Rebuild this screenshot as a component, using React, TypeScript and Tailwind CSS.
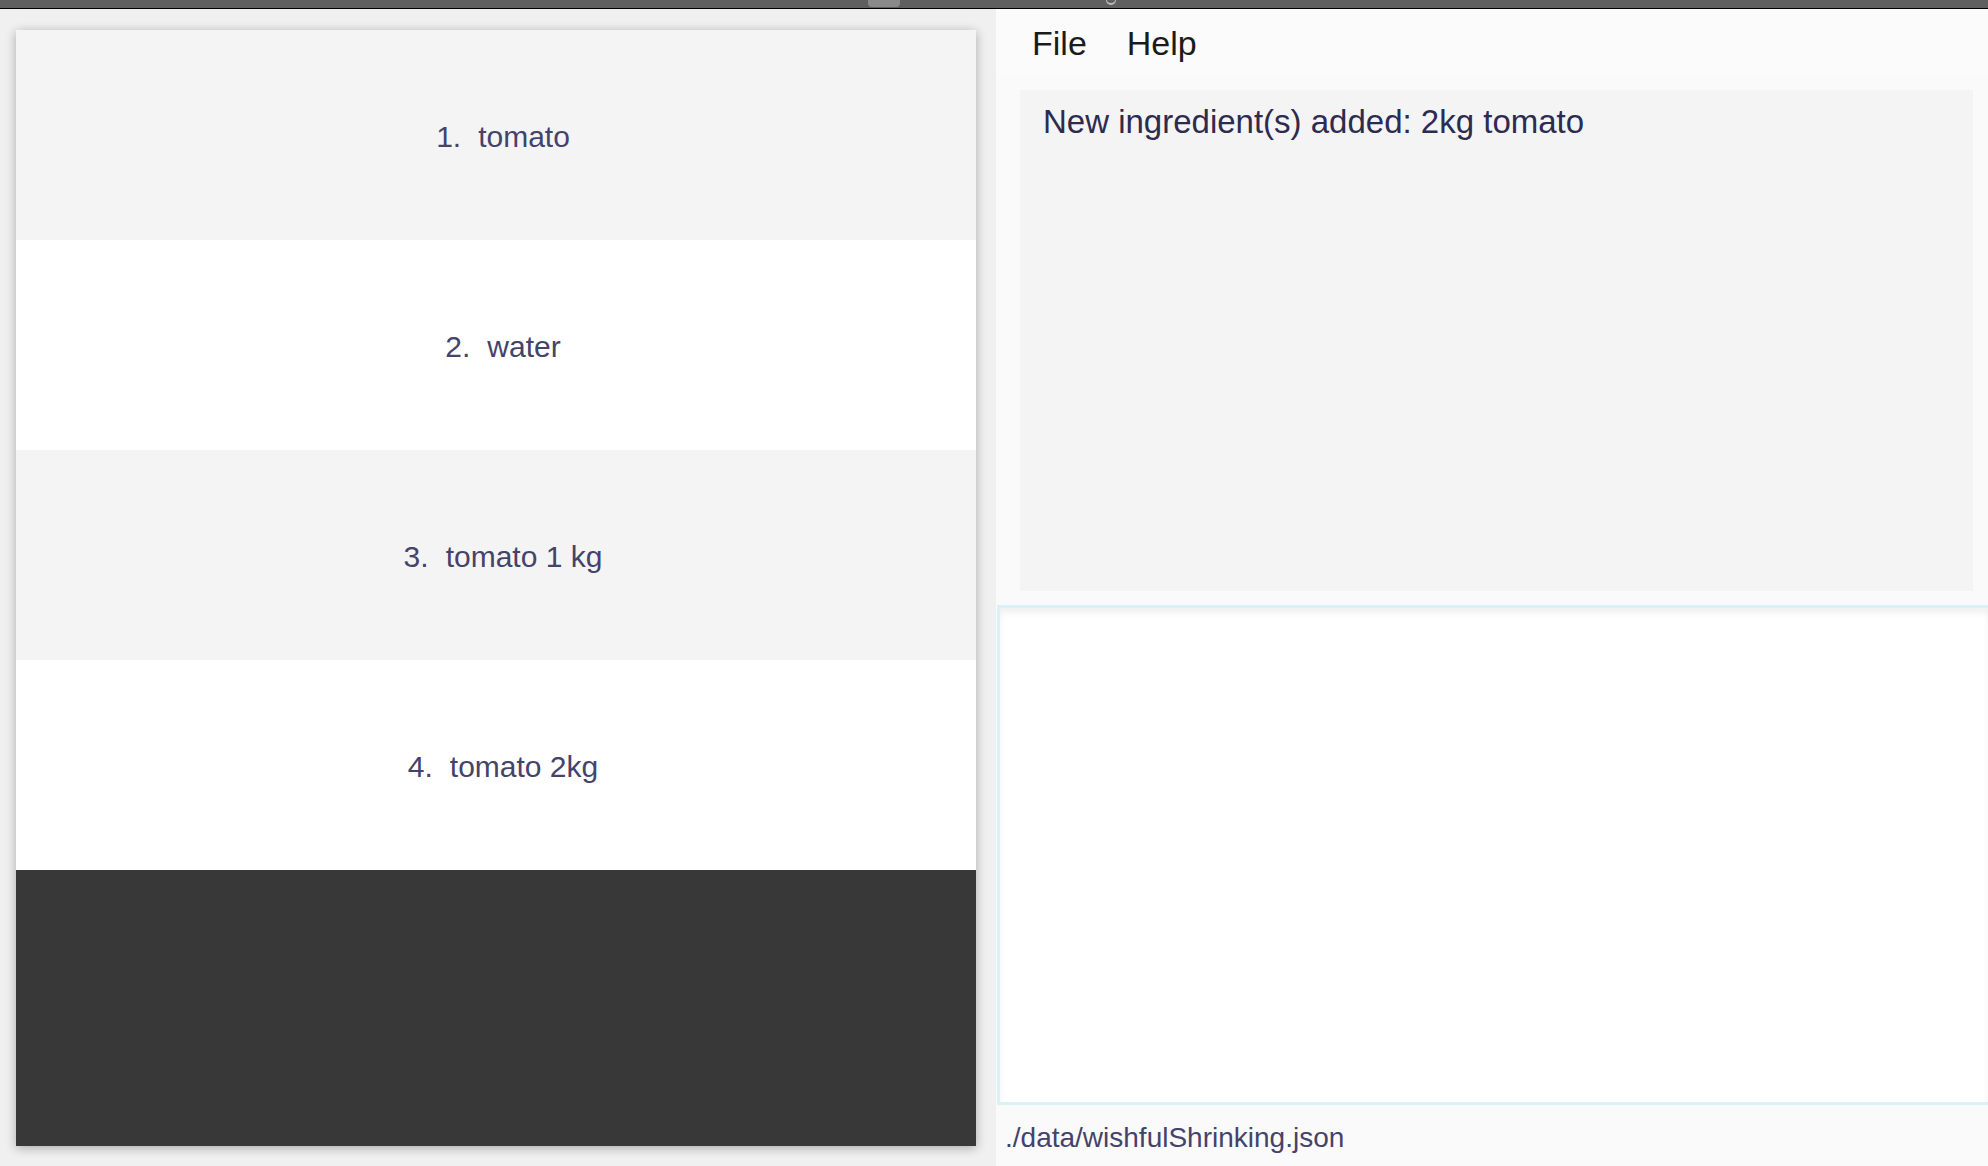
import React from "react";

type Ingredient = { name: string };

const ingredients: Ingredient[] = [
    { name: "tomato" },
    { name: "water" },
    { name: "tomato 1 kg" },
    { name: "tomato 2kg" },
];

const IngredientRow = ({ index, item }: { index: number; item: Ingredient }) => {
    const bg = index % 2 === 0 ? "bg-[#f4f4f4]" : "bg-white";
    return <div className={`${bg} h-[210px] shrink-0 flex items-center justify-center pl-[14px] pt-[3px]`}>
        <span className="text-[30px] leading-none text-[#44436a]">{index + 1}.</span>
        <span className="text-[30px] leading-none text-[#44436a] ml-[17px]">{item.name}</span>
    </div>
}

export default function App() {
    return <div className="w-[1988px] h-[1166px] flex flex-col overflow-hidden bg-[#f0f0f0] font-['Liberation_Sans',Arial,sans-serif]">
        {/* title bar remnant */}
        <div className="h-[8px] shrink-0 bg-[#5f5f5f] relative">
            <div className="absolute left-[868px] top-0 w-[32px] h-[7px] bg-[#8a8a8a] rounded-b-sm"></div>
            <div className="absolute left-[1106px] top-0 w-[10px] h-[5px] border-b-2 border-l border-r border-[#bdbdbd] rounded-b-full"></div>
        </div>
        <div className="h-px shrink-0 bg-black"></div>
        <div className="flex flex-1 min-h-0">
            {/* ingredient list */}
            <div className="w-[996px] shrink-0 pl-[16px] pr-[20px] pt-[21px] pb-[20px] bg-[#f0f0f0]">
                <div className="h-full flex flex-col bg-[#383838] shadow-[0_2px_10px_rgba(0,0,0,0.3)]">
                    {ingredients.map((it, i) => <IngredientRow key={i} index={i} item={it} />)}
                </div>
            </div>
            {/* right side */}
            <div className="flex-1 flex flex-col bg-[#fafafa]">
                <div className="h-[67px] shrink-0 flex items-center gap-[40px] pl-[36px] pt-[1px] bg-[#fbfbfb]">
                    <span className="text-[34px] leading-none text-[#1b1b1b]">File</span>
                    <span className="text-[34px] leading-none text-[#1b1b1b]">Help</span>
                </div>
                <div className="pl-[24px] pr-[15px] pt-[14px] pb-[14px]">
                    <div className="h-[501px] bg-[#f4f4f4] pl-[23px] pt-[15px]">
                        <p className="text-[33px] leading-none text-[#2d2b50]">New ingredient(s) added: 2kg tomato</p>
                    </div>
                </div>
                <div className="h-[500px] shrink-0 ml-px border-[3px] border-r-0 border-[#dcf0f8] bg-white shadow-[inset_0_5px_6px_rgba(0,0,0,0.06)]"></div>
                <div className="flex-1 flex items-center pl-[9px] pt-[4px]">
                    <span className="text-[28px] leading-none text-[#44436a]">./data/wishfulShrinking.json</span>
                </div>
            </div>
        </div>
    </div>
}
